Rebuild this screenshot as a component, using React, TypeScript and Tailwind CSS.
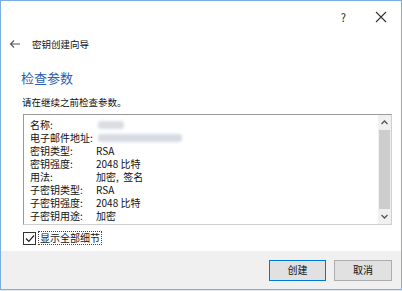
import React from "react";

const rows: [string, string][] = [
  ["名称:", ""],
  ["电子邮件地址:", ""],
  ["密钥类型:", "RSA"],
  ["密钥强度:", "2048 比特"],
  ["用法:", "加密,  签名"],
  ["子密钥类型:", "RSA"],
  ["子密钥强度:", "2048 比特"],
  ["子密钥用途:", "加密"],
];

export default function App() {
  const font = { fontFamily: '"Noto Sans CJK SC", "Liberation Sans", sans-serif' };
  return (
    <div
      className="w-[402px] h-[291px] bg-[#dfe9f5] overflow-hidden text-[#000]"
      style={font}
    >
      <div className="w-[402px] h-[290px] border border-[#7eaee0] bg-white flex flex-col">
        {/* title bar */}
        <div className="h-[30px] flex items-center justify-end">
          <span className="text-[11px] text-[#222] mr-[29px] mt-[2px]">?</span>
          <svg width="12" height="12" viewBox="0 0 12 12" className="mr-[14px] mt-[2px]">
            <path d="M1 1 L11 11 M11 1 L1 11" stroke="#333" strokeWidth="1.1" />
          </svg>
        </div>
        {/* header */}
        <div className="h-[26px] flex items-center pl-[8px]">
          <svg width="12" height="10" viewBox="0 0 12 10">
            <path d="M11 5 H1.5 M5 1.5 L1.5 5 L5 8.5" stroke="#555" strokeWidth="1.1" fill="none" />
          </svg>
          <span className="ml-[11px] text-[9.5px] text-[#111]">密钥创建向导</span>
        </div>
        {/* heading */}
        <div className="pl-[20px] mt-[11px] text-[13px] leading-[20px] text-[#2a5db0]">检查参数</div>
        <div className="pl-[21px] mt-[7px] text-[9.5px] leading-[14px] text-[#111]">请在继续之前检查参数。</div>
        {/* textbox */}
        <div className="ml-[22px] mr-[9px] mt-[5px] h-[111px] border border-[#9a9a9a] border-r-[#cfcfcf] border-b-[#cfcfcf] flex">
          <div className="flex-1 pl-[6px] pt-[3px]">
            {rows.map(([k, v], i) => (
              <div key={i} className="flex h-[13px] items-center text-[10px] leading-[13px] text-[#111]">
                <span className="w-[66px] shrink-0 whitespace-nowrap">{k}</span>
                {i === 0 ? (
                  <span className="h-[8px] w-[26px] bg-[#d8dde3] rounded-[3px] blur-[1.5px] ml-[2px]" />
                ) : i === 1 ? (
                  <span className="h-[8px] w-[84px] bg-[#d6dbe2] rounded-[3px] blur-[1.5px] ml-[2px]" />
                ) : (
                  <span className="whitespace-pre text-[10px]">
                    {v}
                  </span>
                )}
              </div>
            ))}
          </div>
          <div className="w-[13px] bg-[#f0f0f0] flex flex-col">
            <div className="h-[15px] flex items-center justify-center">
              <svg width="7" height="5" viewBox="0 0 7 5">
                <path d="M0.5 4 L3.5 1 L6.5 4" stroke="#555" strokeWidth="1.3" fill="none" />
              </svg>
            </div>
            <div className="flex-1 mx-[1px] bg-[#cdcdcd]" />
            <div className="h-[15px] flex items-center justify-center">
              <svg width="7" height="5" viewBox="0 0 7 5">
                <path d="M0.5 1 L3.5 4 L6.5 1" stroke="#555" strokeWidth="1.3" fill="none" />
              </svg>
            </div>
          </div>
        </div>
        {/* checkbox */}
        <div className="flex items-center ml-[22px] mt-[6px] h-[14px]">
          <div className="w-[13px] h-[13px] border border-[#333] bg-white flex items-center justify-center">
            <svg width="10" height="9" viewBox="0 0 10 9">
              <path d="M1 4.5 L3.8 7.3 L9 1.5" stroke="#222" strokeWidth="1.2" fill="none" />
            </svg>
          </div>
          <span className="ml-[2px] px-[1px] border border-dotted border-[#444] text-[10px] leading-[12px] text-[#111]">
            显示全部细节
          </span>
        </div>
        {/* footer */}
        <div className="mt-auto h-[38px] bg-[#f0f0f0] flex items-center justify-end pr-[9px] gap-[8px]">
          <button className="w-[57px] h-[21px] border border-[#0078d7] bg-[#e1e1e1] text-[10px] leading-[12px] text-[#111]" style={font}>
            创建
          </button>
          <button className="w-[58px] h-[21px] border border-[#adadad] bg-[#e1e1e1] text-[10px] leading-[12px] text-[#111]" style={font}>
            取消
          </button>
        </div>
      </div>
    </div>
  );
}
